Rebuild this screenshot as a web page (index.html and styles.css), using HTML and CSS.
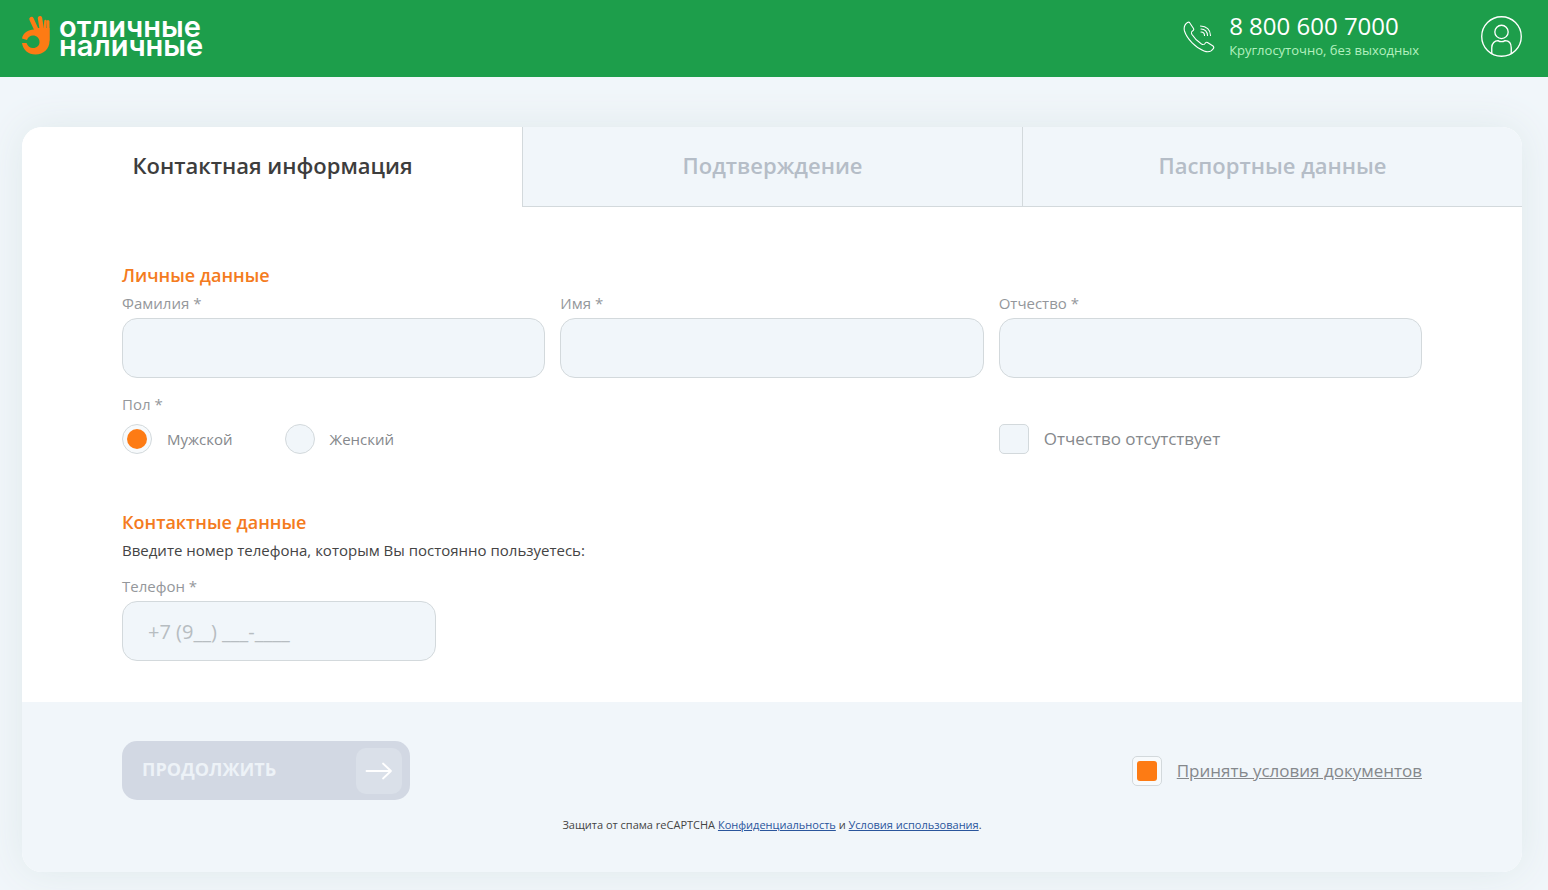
FILE: index.html
```html
<!DOCTYPE html>
<html lang="ru">
<head>
<meta charset="utf-8">
<title>Отличные наличные — Контактная информация</title>
<link rel="stylesheet" href="styles.css">
</head>
<body>
<header class="header">
  <a class="logo" href="#" aria-label="Отличные наличные">
    <svg class="logo-icon" viewBox="0 0 28 39" aria-hidden="true">
      <g fill="none" stroke="#fd7b14" stroke-linecap="round">
        <path d="M9.500 3L15 15" stroke-width="4.400"/>
        <path d="M18 2.200L20 15" stroke-width="4.400"/>
        <path d="M23.500 5L22.500 15" stroke-width="2.500"/>
        <path d="M26 5.500V24" stroke-width="3"/>
      </g>
      <path fill="#fd7b14" d="M0 22.500C1 17 6 13.500 12 13.500L15 12H27.500V25C27.500 33 21.500 38.500 13.500 38.500C6.500 38.500 1 34 0 27H4.500C5.500 30 8 32 11 32C15 32 17.500 29.500 17.500 26C17.500 22 14.500 19.500 11 19.500C8 19.500 6 21 5 24Z"/>
    </svg>
    <span class="logo-text">отличные<br>наличные</span>
  </a>
  <div class="contacts">
    <svg class="phone-icon" viewBox="0 0 32 32" aria-hidden="true">
      <g fill="none" stroke="#fff" stroke-width="1.100" stroke-linecap="round" stroke-linejoin="round">
        <path d="M6.500 1.500L10.500 7.500C11 8.500 10.500 9.500 9.500 10C8 11 8 11.500 9 13.500C11.500 17.500 14.500 20.500 18.500 23C20.500 24 21 24 22 22.500C22.500 21.500 23.500 21 24.500 21.500L30 25C31 26 31 27 30 28C28 31 25 31.500 21 30C13 27 4 18 1.500 10C.5 6 1.500 3.500 4.500 1.500C5.500 1 6 1 6.500 1.500Z"/>
        <path d="M18 11C20 11 21.500 12.500 21.500 14.500M18 8C22 8 24.500 11 24.500 14.500M17.500 5C23.500 5 27.500 9 27.500 14.500"/>
      </g>
    </svg>
    <div class="phone">
      <a class="phone-number" href="tel:88006007000">8 800 600 7000</a>
      <span class="phone-hours">Круглосуточно, без выходных</span>
    </div>
    <a class="profile" href="#" aria-label="Личный кабинет">
      <svg class="profile-icon" viewBox="0 0 40 40" aria-hidden="true">
        <g fill="none" stroke="#fff" stroke-width="1.300">
          <circle cx="20" cy="20" r="19.300"/>
          <circle cx="20" cy="15.500" r="6.500"/>
          <path d="M10.500 36.500V31C10.500 26.500 13.500 24 16.500 24C19 25.500 21 25.500 23.500 24C27 24 29.500 26.500 29.500 31V36.500"/>
        </g>
      </svg>
    </a>
  </div>
</header>

<main class="page">
  <form class="card">
    <nav class="tabs">
      <a class="tab tab-active" href="#" aria-current="step">Контактная информация</a>
      <a class="tab" href="#">Подтверждение</a>
      <a class="tab" href="#">Паспортные данные</a>
    </nav>

    <div class="content">
      <section>
        <h2 class="heading">Личные данные</h2>
        <div class="grid">
          <div class="field">
            <label class="label" for="surname">Фамилия *</label>
            <input class="input" id="surname" type="text">
          </div>
          <div class="field">
            <label class="label" for="name">Имя *</label>
            <input class="input" id="name" type="text">
          </div>
          <div class="field">
            <label class="label" for="patronymic">Отчество *</label>
            <input class="input" id="patronymic" type="text">
          </div>
          <div class="gender" role="radiogroup" aria-labelledby="gender-label">
            <span class="label" id="gender-label">Пол *</span>
            <div class="options">
              <label class="option"><input class="mark mark-round" type="radio" name="gender" checked>Мужской</label>
              <label class="option"><input class="mark mark-round" type="radio" name="gender">Женский</label>
            </div>
          </div>
          <label class="option option-large no-patronymic"><input class="mark" type="checkbox">Отчество отсутствует</label>
        </div>
      </section>

      <section class="contact">
        <h2 class="heading">Контактные данные</h2>
        <p class="hint">Введите номер телефона, которым Вы постоянно пользуетесь:</p>
        <div class="field field-phone">
          <label class="label" for="tel">Телефон *</label>
          <input class="input" id="tel" type="tel" placeholder="+7 (9__) ___-____">
        </div>
      </section>
    </div>

    <footer class="footer">
      <div class="actions">
        <button class="submit" type="submit" disabled>
          <span class="submit-text">ПРОДОЛЖИТЬ</span>
          <span class="submit-arrow">
            <svg viewBox="0 0 28 20" width="28" height="20" aria-hidden="true"><path d="M1.500 10H26M18 2.500L26 10L18 17.500" fill="none" stroke="#fff" stroke-width="1.800" stroke-linecap="round" stroke-linejoin="round"/></svg>
          </span>
        </button>
        <div class="option option-large">
          <input class="mark" id="terms" type="checkbox" checked aria-label="Принять условия документов">
          <a class="terms" href="#">Принять условия документов</a>
        </div>
      </div>
      <p class="captcha">Защита от спама reCAPTCHA <a href="#">Конфиденциальность</a> и <a href="#">Условия использования</a>.</p>
    </footer>
  </form>
</main>
</body>
</html>
```

FILE: styles.css
```css
* {
  box-sizing: border-box;
}

body {
  margin: 0;
  background: #f1f6fa;
  color: #444;
  font-family: "Open Sans", "Noto Sans", sans-serif;
  font-size: 15px;
}

a {
  color: inherit;
  text-decoration: none;
}

.header {
  display: flex;
  align-items: center;
  justify-content: space-between;
  min-height: 77px;
  padding: 0 26px 4px 22px;
  background: #1d9e4b;
  color: #fff;
}

.logo {
  display: flex;
  align-items: center;
  gap: 9px;
  padding-bottom: 2px;
}

.logo-icon {
  width: 28px;
  height: 39px;
}

.logo-text {
  font-family: Inter, sans-serif;
  font-size: 29px;
  font-weight: 600;
  line-height: 19px;
}

.contacts {
  display: flex;
  align-items: center;
}

.phone-icon {
  width: 32px;
  height: 32px;
  margin-right: 14px;
}

.phone {
  display: flex;
  flex-direction: column;
  margin-right: 62px;
  padding-bottom: 2px;
}

.phone-number {
  font-size: 24px;
  line-height: 28px;
}

.phone-hours {
  color: #b3f0bf;
  font-size: 13px;
  line-height: 20px;
}

.profile-icon {
  display: block;
  width: 41px;
  height: 41px;
}

.page {
  padding: 50px 26px 18px 22px;
}

.card {
  overflow: hidden;
  border-radius: 20px;
  background: #fff;
  box-shadow: 0 0 40px #dfe9eb;
}

.tabs {
  display: grid;
  grid-template-columns: repeat(3, 1fr);
}

.tab {
  height: 80px;
  border-bottom: 1px solid #d3d9dc;
  border-left: 1px solid #d3d9dc;
  background: #f1f6fa;
  color: #b5bdc7;
  font-size: 22px;
  font-weight: 600;
  line-height: 76px;
  text-align: center;
}

.tab-active {
  border-color: transparent;
  background: #fff;
  color: #3d3d3d;
}

.content {
  padding: 54px 100px 41px;
}

.heading {
  margin: 0;
  color: #f47b20;
  font-size: 18px;
  font-weight: 600;
  line-height: 29px;
}

.grid {
  display: grid;
  grid-template-columns: repeat(3, 1fr);
  gap: 15px;
}

.field,
.gender {
  display: flex;
  flex-direction: column;
}

.label {
  padding-bottom: 2px;
  color: #94979b;
  font-size: 15px;
  line-height: 26px;
}

.input {
  width: 100%;
  height: 60px;
  padding: 0 25px;
  border: 1px solid #d3d9dc;
  border-radius: 15px;
  background: #f1f6fa;
  color: #444;
  font: inherit;
  font-size: 20px;
}

.input::placeholder {
  color: #b7bdc1;
  opacity: 1;
}

.gender {
  grid-column: span 2;
}

.gender .label {
  line-height: 22px;
}

.options {
  display: flex;
  gap: 52px;
  padding-top: 7px;
}

.option {
  display: flex;
  align-items: center;
  gap: 15px;
  color: #85888c;
  font-size: 15px;
  line-height: 30px;
}

.option-large {
  font-size: 17px;
}

.no-patronymic {
  align-self: end;
}

.mark {
  appearance: none;
  display: grid;
  place-items: center;
  flex: none;
  width: 30px;
  height: 30px;
  margin: 0;
  border: 1px solid #d3d9dc;
  border-radius: 5px;
  background: #f1f6fa;
}

.mark:checked {
  background: #f7fafc;
}

.mark:checked::before {
  content: "";
  width: 20px;
  height: 20px;
  border-radius: 3px;
  background: #fd7b14;
}

.mark-round,
.mark-round:checked::before {
  border-radius: 50%;
}

.contact {
  padding-top: 54px;
}

.hint {
  margin: 0;
  padding-bottom: 10px;
  font-size: 15px;
  line-height: 26px;
}

.field-phone {
  max-width: 314px;
}

.footer {
  padding: 39px 100px 37px;
  background: #f1f6fa;
}

.actions {
  display: flex;
  align-items: center;
  justify-content: space-between;
}

.submit {
  display: flex;
  align-items: center;
  justify-content: space-between;
  width: 288px;
  height: 59px;
  padding: 0 8px 0 20px;
  border: 0;
  border-radius: 15px;
  background: #d2d8e3;
  color: #edf2f7;
  font: inherit;
  font-size: 18px;
  font-weight: 700;
}

.submit-text {
  padding-bottom: 4px;
}

.submit-arrow {
  display: grid;
  place-items: center;
  width: 46px;
  height: 46px;
  border-radius: 10px;
  background: #dae0e9;
}

.terms {
  text-decoration: underline;
}

.captcha {
  margin: 15px 0 0;
  font-size: 11px;
  line-height: 20px;
  text-align: center;
}

.captcha a {
  color: #2a559c;
  text-decoration: underline;
}
```
